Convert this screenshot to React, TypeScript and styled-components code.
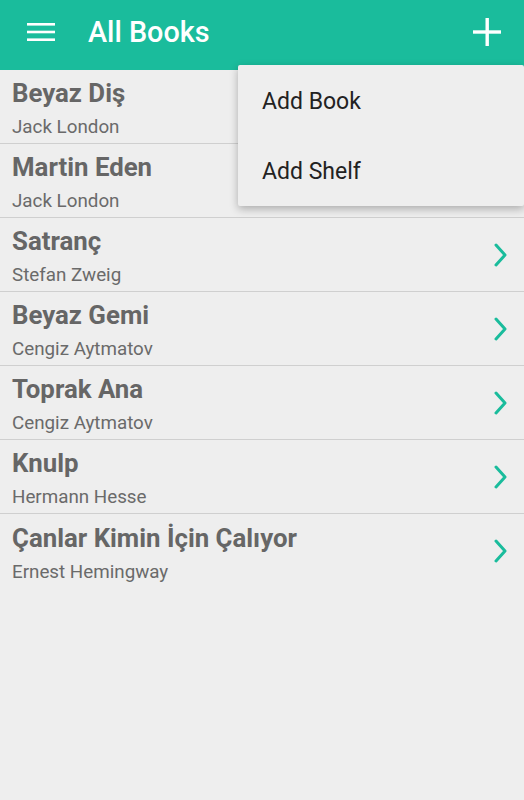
import React from 'react';
import styled, { createGlobalStyle } from 'styled-components';

const GlobalStyle = createGlobalStyle`
    html, body {
        margin: 0;
        padding: 0;
        background: #eeeeee;
        font-family: Roboto, 'Noto Sans', sans-serif;
    }
`;

const Screen = styled.div`
    position: relative;
    width: 524px;
    height: 800px;
    background: #eeeeee;
    overflow: hidden;
`;

const AppBar = styled.header`
    display: flex;
    align-items: center;
    height: 70px;
    padding: 0 22px 6px 26px;
    background: #1abc9c;
    color: #ffffff;
    box-sizing: border-box;
`;

const IconButton = styled.button`
    display: flex;
    align-items: center;
    justify-content: center;
    padding: 0;
    border: none;
    background: none;
    color: inherit;
`;

const Title = styled.h1`
    flex: 1;
    margin: 0 0 0 32px;
    font-size: 28.8px;
    font-weight: 500;
`;

const BookList = styled.ul`
    list-style: none;
    margin: 0;
    padding: 0;
`;

const BookRow = styled.li`
    display: flex;
    align-items: center;
    height: 74px;
    padding: 0 16px 0 12px;
    border-bottom: 1px solid #cfcfcf;
    box-sizing: border-box;

    &:last-child {
        border-bottom: none;
    }
`;

const BookInfo = styled.div`
    flex: 1;
    display: flex;
    flex-direction: column;
    padding-top: 5px;
`;

const BookTitle = styled.span`
    font-size: 25.8px;
    line-height: 30px;
    font-weight: 700;
    color: #666666;
`;

const BookAuthor = styled.span`
    margin-top: 6px;
    font-size: 18.8px;
    line-height: 26px;
    font-weight: 400;
    color: #6a6a6a;
`;

const Menu = styled.div`
    position: absolute;
    top: 65px;
    right: 0;
    width: 286px;
    padding-top: 1px;
    background: #eeeeee;
    border-radius: 2px;
    box-shadow: 0 3px 8px rgba(0, 0, 0, 0.28);
`;

const MenuItem = styled.div`
    display: flex;
    align-items: center;
    height: 70px;
    padding-left: 24px;
    font-size: 23px;
    color: #222222;
`;

const books = [
    { title: 'Beyaz Diş', author: 'Jack London' },
    { title: 'Martin Eden', author: 'Jack London' },
    { title: 'Satranç', author: 'Stefan Zweig' },
    { title: 'Beyaz Gemi', author: 'Cengiz Aytmatov' },
    { title: 'Toprak Ana', author: 'Cengiz Aytmatov' },
    { title: 'Knulp', author: 'Hermann Hesse' },
    { title: 'Çanlar Kimin İçin Çalıyor', author: 'Ernest Hemingway' },
];

const Chevron = () => (
    <svg width="14" height="24" viewBox="0 0 14 24">
        <path d="M2 2 L11 12 L2 22" fill="none" stroke="#1abc9c" strokeWidth="3" strokeLinecap="round" strokeLinejoin="round" />
    </svg>
);

const App: React.FC = () => {
    return (
        <Screen>
            <GlobalStyle />
            <AppBar>
                <IconButton>
                    <svg width="30" height="20" viewBox="0 0 30 20">
                        <rect x="1" y="1" width="28" height="2.6" fill="#ffffff" />
                        <rect x="1" y="8.7" width="28" height="2.6" fill="#ffffff" />
                        <rect x="1" y="16.4" width="28" height="2.6" fill="#ffffff" />
                    </svg>
                </IconButton>
                <Title>All Books</Title>
                <IconButton>
                    <svg width="30" height="30" viewBox="0 0 30 30">
                        <rect x="13.5" y="1" width="3.4" height="28" fill="#ffffff" />
                        <rect x="1" y="13.3" width="28" height="3.4" fill="#ffffff" />
                    </svg>
                </IconButton>
            </AppBar>
            <BookList>
                {books.map((book) => (
                    <BookRow key={book.title}>
                        <BookInfo>
                            <BookTitle>{book.title}</BookTitle>
                            <BookAuthor>{book.author}</BookAuthor>
                        </BookInfo>
                        <Chevron />
                    </BookRow>
                ))}
            </BookList>
            <Menu>
                <MenuItem>Add Book</MenuItem>
                <MenuItem>Add Shelf</MenuItem>
            </Menu>
        </Screen>
    );
};

export default App;
